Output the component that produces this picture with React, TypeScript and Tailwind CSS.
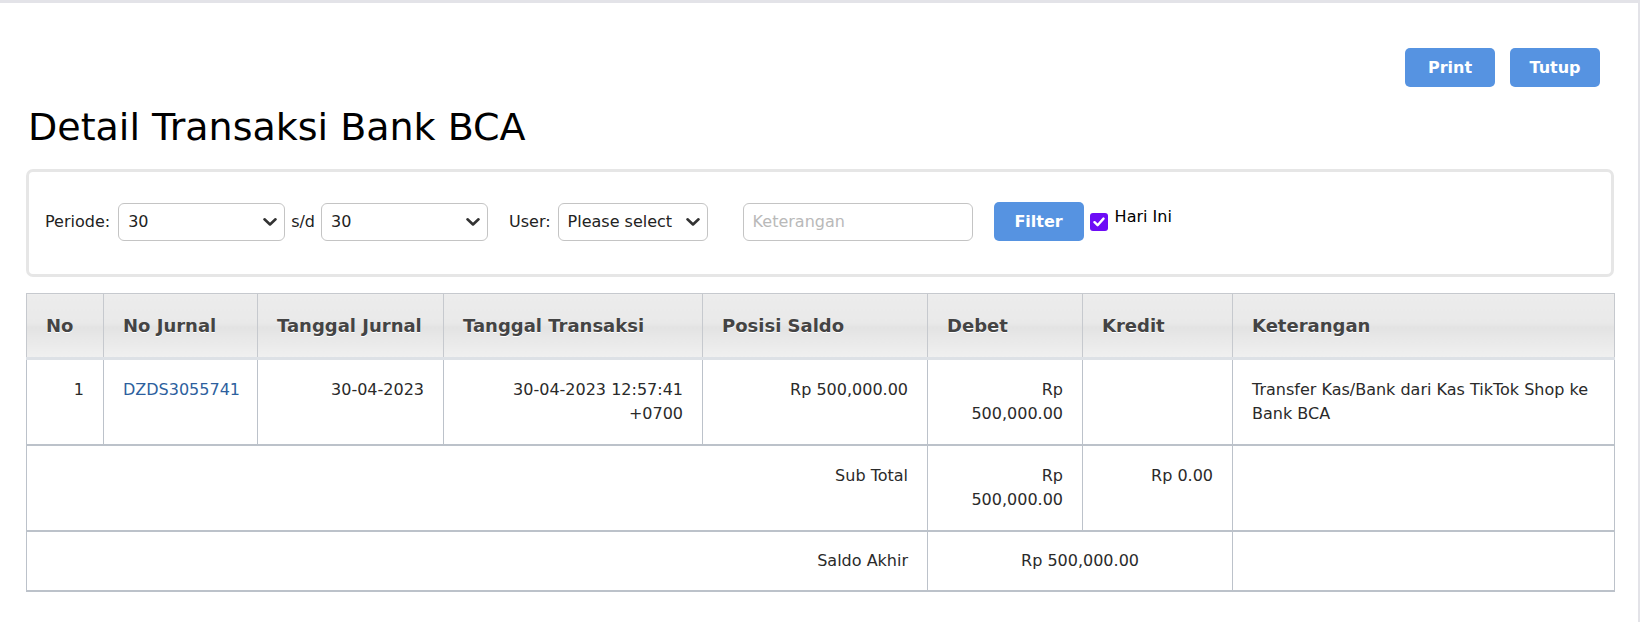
import React, { useState } from 'react';

const days = Array.from({ length: 31 }, (_, i) => String(i + 1));

function Chevron() {
  return (
    <svg
      className="pointer-events-none absolute right-[8px] top-1/2 -translate-y-1/2"
      width="14"
      height="9"
      viewBox="0 0 14 9"
      fill="none"
    >
      <path d="M1.5 1.8 L7 7 L12.5 1.8" stroke="#333" strokeWidth="2.6" strokeLinecap="round" strokeLinejoin="round" />
    </svg>
  );
}

interface SelectBoxProps {
  value: string;
  onChange: (v: string) => void;
  options: string[];
  width: string;
}

function SelectBox({ value, onChange, options, width }: SelectBoxProps) {
  return (
    <div className={`relative h-[38px] ${width}`}>
      <select
        value={value}
        onChange={(e) => onChange(e.target.value)}
        className="h-full w-full appearance-none rounded-[6px] border border-[#c4c4c4] bg-white pl-[9px] pr-[26px] text-[16px] text-[#222] outline-none"
      >
        {options.map((o) => (
          <option key={o} value={o}>{o}</option>
        ))}
      </select>
      <Chevron />
    </div>
  );
}

const th =
  'h-[65px] px-[19px] text-left align-middle whitespace-nowrap text-[18px] leading-[27px] font-bold text-[#444] [text-shadow:0_1px_0_#fff] border border-[#c6c9ce] border-b-[3px] border-b-[#dde1e6] bg-[linear-gradient(to_bottom,#ececec_0%,#e9e9e9_45%,#e3e3e3_52%,#f0f0f0_100%)]';
const td = 'px-[19px] py-[18px] align-top text-[16px] leading-6 text-[#2a2a2a] border-x border-x-[#bcc2ca] border-y-2 border-y-[#bcc2ca]';
const tdLast = 'px-[19px] py-[17px] align-top text-[16px] leading-6 text-[#2a2a2a] border-x border-x-[#bcc2ca] border-t-2 border-b-2 border-y-[#bcc2ca]';

export default function App() {
  const [from, setFrom] = useState('30');
  const [to, setTo] = useState('30');
  const [user, setUser] = useState('Please select');
  const [keterangan, setKeterangan] = useState('');
  const [today, setToday] = useState(true);

  return (
    <div className="min-h-[622px] w-[1640px] border-t-[3px] border-r-2 border-[#e3e3e8] bg-white pl-[26px] font-['DejaVu_Sans',Verdana,sans-serif] text-[16px] text-[#222]">
      <div className="w-[1588px]">
        {/* tombol atas */}
        <div className="flex justify-end gap-[15px] pr-[14px] pt-[45px]">
          <button className="h-[39px] w-[90px] rounded-[5px] bg-[#5693e1] text-[16px] font-bold text-white">Print</button>
          <button className="h-[39px] w-[90px] rounded-[5px] bg-[#5693e1] text-[16px] font-bold text-white">Tutup</button>
        </div>

        <h1 className="mt-[18px] pl-[2px] text-[38px] leading-[44px] font-normal text-black">Detail Transaksi Bank BCA</h1>

        {/* filter */}
        <div className="mt-[20px] rounded-[7px] border-[3px] border-[#e6e6e6] pt-[30px] pb-[33px] pl-[16px]">
          <div className="flex h-[39px] items-center">
            <span className="mr-[8px]">Periode:</span>
            <SelectBox value={from} onChange={setFrom} options={days} width="w-[167px]" />
            <span className="mx-[6px]">s/d</span>
            <SelectBox value={to} onChange={setTo} options={days} width="w-[167px]" />
            <span className="ml-[21px] mr-[7px]">User:</span>
            <SelectBox value={user} onChange={setUser} options={['Please select', 'admin']} width="w-[150px]" />
            <input
              value={keterangan}
              onChange={(e) => setKeterangan(e.target.value)}
              placeholder="Keterangan"
              className="ml-[35px] h-[38px] w-[230px] rounded-[6px] border border-[#c4c4c4] px-[9px] text-[16px] outline-none placeholder:text-[#b9b9b9]"
            />
            <button className="ml-[21px] h-[39px] w-[90px] rounded-[5px] bg-[#5693e1] text-[16px] font-bold text-white">Filter</button>
            <label className="ml-[6px] flex items-start self-start">
              <span
                onClick={() => setToday(!today)}
                className={`mt-[11px] flex h-[18px] w-[18px] items-center justify-center rounded-[3px] ${today ? 'bg-[#6d0cf6]' : 'border border-[#777] bg-white'}`}
              >
                {today && (
                  <svg width="12" height="10" viewBox="0 0 12 10" fill="none">
                    <path d="M1.5 5.2 L4.6 8.2 L10.5 1.6" stroke="#fff" strokeWidth="2.4" strokeLinecap="round" strokeLinejoin="round" />
                  </svg>
                )}
              </span>
              <span className="ml-[7px] mt-[3px] leading-6 text-black">Hari Ini</span>
            </label>
          </div>
        </div>

        {/* tabel */}
        <table className="mt-[16px] w-[1588px] table-fixed border-collapse">
          <colgroup>
            <col className="w-[77px]" />
            <col className="w-[154px]" />
            <col className="w-[186px]" />
            <col className="w-[259px]" />
            <col className="w-[225px]" />
            <col className="w-[155px]" />
            <col className="w-[150px]" />
            <col className="w-[382px]" />
          </colgroup>
          <thead>
            <tr>
              <th className={th}>No</th>
              <th className={th}>No Jurnal</th>
              <th className={th}>Tanggal Jurnal</th>
              <th className={th}>Tanggal Transaksi</th>
              <th className={th}>Posisi Saldo</th>
              <th className={th}>Debet</th>
              <th className={th}>Kredit</th>
              <th className={th}>Keterangan</th>
            </tr>
          </thead>
          <tbody>
            <tr>
              <td className={`${td} text-right`}>1</td>
              <td className={td}>
                <a href="#" className="text-[#2d5f9e]">DZDS3055741</a>
              </td>
              <td className={`${td} text-right`}>30-04-2023</td>
              <td className={`${td} text-right`}>30-04-2023 12:57:41<br />+0700</td>
              <td className={`${td} text-right`}>Rp 500,000.00</td>
              <td className={`${td} text-right`}>Rp<br />500,000.00</td>
              <td className={`${td} text-right`}></td>
              <td className={`${td} whitespace-nowrap`}>Transfer Kas/Bank dari Kas TikTok Shop ke<br />Bank BCA</td>
            </tr>
            <tr>
              <td colSpan={5} className={`${td} text-right`}>Sub Total</td>
              <td className={`${td} text-right`}>Rp<br />500,000.00</td>
              <td className={`${td} text-right`}>Rp 0.00</td>
              <td className={td}></td>
            </tr>
            <tr>
              <td colSpan={5} className={`${tdLast} text-right`}>Saldo Akhir</td>
              <td colSpan={2} className={`${tdLast} text-center`}>Rp 500,000.00</td>
              <td className={tdLast}></td>
            </tr>
          </tbody>
        </table>
      </div>
    </div>
  );
}
